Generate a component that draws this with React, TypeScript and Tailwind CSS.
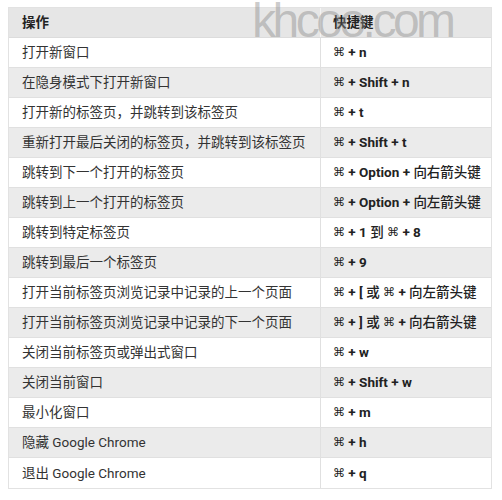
import React from "react";

const rows: [string, string][] = [
  ["打开新窗口", "⌘ + n"],
  ["在隐身模式下打开新窗口", "⌘ + Shift + n"],
  ["打开新的标签页，并跳转到该标签页", "⌘ + t"],
  ["重新打开最后关闭的标签页，并跳转到该标签页", "⌘ + Shift + t"],
  ["跳转到下一个打开的标签页", "⌘ + Option + 向右箭头键"],
  ["跳转到上一个打开的标签页", "⌘ + Option + 向左箭头键"],
  ["跳转到特定标签页", "⌘ + 1 到 ⌘ + 8"],
  ["跳转到最后一个标签页", "⌘ + 9"],
  ["打开当前标签页浏览记录中记录的上一个页面", "⌘ + [ 或 ⌘ + 向左箭头键"],
  ["打开当前标签页浏览记录中记录的下一个页面", "⌘ + ] 或 ⌘ + 向右箭头键"],
  ["关闭当前标签页或弹出式窗口", "⌘ + w"],
  ["关闭当前窗口", "⌘ + Shift + w"],
  ["最小化窗口", "⌘ + m"],
  ["隐藏 Google Chrome", "⌘ + h"],
  ["退出 Google Chrome", "⌘ + q"],
];

const leftFont = "font-['Roboto','Noto_Sans_CJK_SC','DejaVu_Sans',sans-serif]";

function Keys({ text }: { text: string }) {
  const parts = text.split(/(⌘|[\u4e00-\u9fff]+)/).filter((p) => p !== "");
  return (
    <>
      {parts.map((p, i) => {
        if (p === "⌘")
          return (
            <span key={i} className="text-[12px] font-normal font-['DejaVu_Sans',sans-serif] relative top-[-0.5px]">
              ⌘
            </span>
          );
        if (/[\u4e00-\u9fff]/.test(p))
          return (
            <span key={i} className="font-medium">
              {p}
            </span>
          );
        return (
          <span key={i} className="whitespace-pre">
            {p}
          </span>
        );
      })}
    </>
  );
}

export default function App() {
  return (
    <div className="w-[502px] h-[500px] bg-white relative overflow-hidden">
      <div className="mx-[8px] mt-[7px] w-[484px] border border-[#e2e2e2] text-[13.5px] text-[#333]">
        <div className="flex h-[30px] bg-[#e6e6e6] border-b border-[#dcdcdc]">
          <div className={`w-[311px] flex items-center pl-[13px] font-bold text-[#222] ${leftFont}`}>操作</div>
          <div className={`flex-1 flex items-center pl-[12px] font-bold text-[#222] border-l border-[#f4f4f4] ${leftFont}`}>快捷键</div>
        </div>
        {rows.map(([a, b], i) => (
          <div
            key={i}
            className={`flex h-[30px] border-b border-[#e0e0e0] last:border-b-0 ${i % 2 === 0 ? "bg-white" : "bg-[#ebebeb]"}`}
          >
            <div className={`w-[311px] flex items-center pl-[13px] whitespace-nowrap ${leftFont}`}>{a}</div>
            <div className={`flex-1 flex items-center pl-[12px] font-bold whitespace-nowrap border-l border-[#e0e0e0] text-[#222] ${leftFont}`}>
              <Keys text={b} />
            </div>
          </div>
        ))}
      </div>
      <div className="absolute left-[252px] top-[-3px] text-[48px] tracking-[-3.5px] leading-none text-[rgba(140,140,140,0.45)] font-['Liberation_Sans',sans-serif] pointer-events-none">
        khcoo.com
      </div>
    </div>
  );
}
